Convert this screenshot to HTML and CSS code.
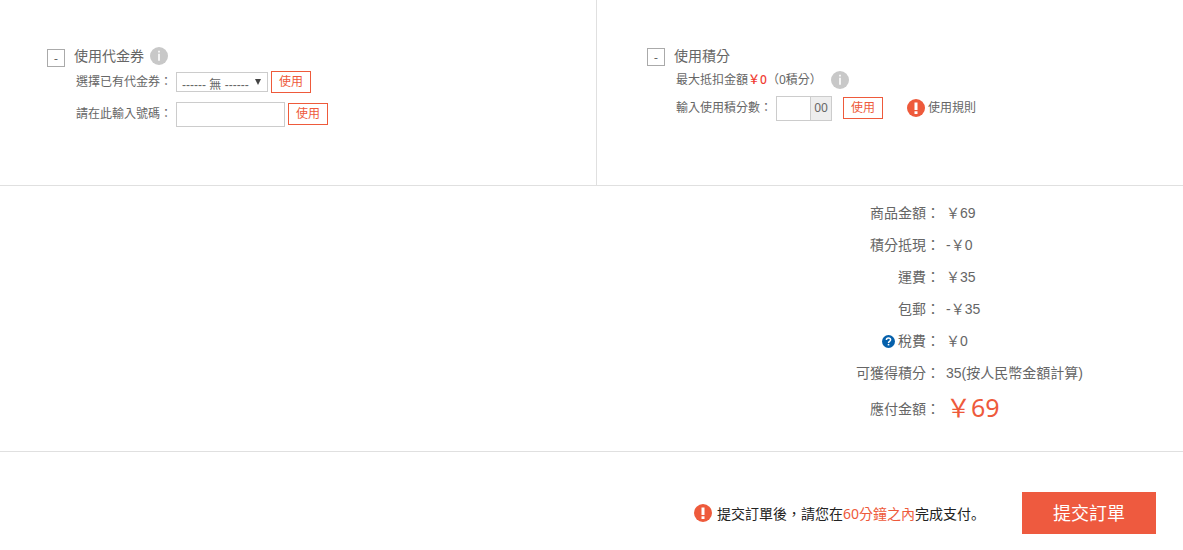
FILE: index.html
```html
<!DOCTYPE html>
<html lang="zh-Hant">
<head>
  <meta charset="UTF-8">
  <title>提交訂單</title>
  <link rel="stylesheet" href="styles.css">
</head>
<body>
  <form>
    <div class="discounts">
      <section class="panel coupon">
        <button type="button" class="toggle">-</button>
        <div class="panel-body">
          <h2>使用代金券
            <svg class="icon" viewBox="0 0 18 18"><circle cx="9" cy="9" r="9" fill="#c8c8c8"/><path d="M8.2 3.8h1.6v1.7H8.2zM8.2 6.8h1.6v7H8.2z" fill="#fff"/></svg>
          </h2>
          <div class="row">
            <label for="coupon">選擇已有代金券：</label>
            <span class="select">
              <select id="coupon"><option>------ 無 ------</option></select>
            </span>
            <button type="button" class="use">使用</button>
          </div>
          <div class="row">
            <label for="code">請在此輸入號碼：</label>
            <input type="text" id="code">
            <button type="button" class="use">使用</button>
          </div>
        </div>
      </section>

      <section class="panel points">
        <button type="button" class="toggle">-</button>
        <div class="panel-body">
          <h2>使用積分</h2>
          <div class="row">
            <span>最大抵扣金額<span class="max">￥0</span>（0積分）</span>
            <svg class="icon info" viewBox="0 0 18 18"><circle cx="9" cy="9" r="9" fill="#c8c8c8"/><path d="M8.2 3.8h1.6v1.7H8.2zM8.2 6.8h1.6v7H8.2z" fill="#fff"/></svg>
          </div>
          <div class="row">
            <label for="points">輸入使用積分數：</label>
            <span class="group"><input type="text" id="points"><span class="addon">00</span></span>
            <button type="button" class="use">使用</button>
            <a href="#" class="rules">
              <svg class="icon" viewBox="0 0 18 18"><circle cx="9" cy="9" r="9" fill="#ee5a3b"/><path d="M7.5 3.5h3v7.5h-3zM7.5 12.3h3V15h-3z" fill="#fff"/></svg>
              使用規則
            </a>
          </div>
        </div>
      </section>
    </div>

    <dl class="summary">
      <dt>商品金額：</dt><dd>￥69</dd>
      <dt>積分抵現：</dt><dd>-￥0</dd>
      <dt>運費：</dt><dd>￥35</dd>
      <dt>包郵：</dt><dd>-￥35</dd>
      <dt>
        <svg class="help" viewBox="0 0 13 13"><circle cx="6.5" cy="6.5" r="6.5" fill="#0560ab"/><path d="M4.4 5Q4.4 3 6.5 3T8.6 4.8Q8.6 5.8 7.5 6.4Q6.5 7 6.5 8" fill="none" stroke="#fff" stroke-width="1.5"/><path d="M5.7 8.9h1.6v1.5H5.7z" fill="#fff"/></svg>
        稅費：
      </dt><dd>￥0</dd>
      <dt>可獲得積分：</dt><dd>35(按人民幣金額計算)</dd>
      <dt class="total">應付金額：</dt><dd class="total price">￥69</dd>
    </dl>

    <div class="submit-bar">
      <p class="tip">
        <svg class="icon" viewBox="0 0 18 18"><circle cx="9" cy="9" r="9" fill="#ee5a3b"/><path d="M7.5 3.5h3v7.5h-3zM7.5 12.3h3V15h-3z" fill="#fff"/></svg>
        <span>提交訂單後，請您在<em>60分鐘之內</em>完成支付<span class="stop" lang="zh-Hans">。</span></span>
      </p>
      <button type="submit" class="submit">提交訂單</button>
    </div>
  </form>
</body>
</html>
```
FILE: styles.css
```css
* {
  box-sizing: border-box;
}
body {
  margin: 0;
  background: #fff;
  color: #666;
  font: 12px/20px "Noto Sans", "Noto Sans CJK TC", sans-serif;
}
button, input, select {
  margin: 0;
  padding: 0;
  font: inherit;
  color: inherit;
  background: #fff;
  border: 1px solid #ccc;
  border-radius: 0;
}
button {
  cursor: pointer;
}
.icon {
  width: 18px;
  height: 18px;
  flex: none;
}

/* coupon and points */
.discounts {
  display: grid;
  grid-template-columns: 597fr 586fr;
  min-height: 186px;
  border-bottom: 1px solid #e0e0e0;
}
.panel {
  display: flex;
  align-items: flex-start;
  gap: 9px;
  padding: 46px 20px 20px 47px;
}
.coupon {
  border-right: 1px solid #e0e0e0;
}
.points {
  padding-left: 50px;
}
.toggle {
  width: 18px;
  height: 18px;
  margin-top: 2px;
  padding-top: 2px;
  border-color: #aaa;
  line-height: 14px;
}
.coupon .toggle {
  margin-top: 3px;
}
h2 {
  display: flex;
  align-items: center;
  gap: 6px;
  margin: 0;
  font-size: 14px;
  font-weight: normal;
  line-height: 20px;
}
.row {
  display: flex;
  align-items: center;
  height: 28px;
  padding-left: 2px;
}
.coupon .row {
  height: 32px;
}
.row label {
  margin-right: 4px;
}
.select {
  position: relative;
}
.select::after {
  content: "";
  position: absolute;
  top: 7px;
  right: 7px;
  border: 3px solid transparent;
  border-top: 6px solid #444;
  border-bottom: 0;
  pointer-events: none;
}
.select select {
  display: block;
  appearance: none;
  width: 92px;
  height: 20px;
  padding: 2px 0 0 5px;
  font-family: "Liberation Sans", "Noto Sans CJK TC", sans-serif;
}
#code {
  width: 109px;
  height: 25px;
}
.use {
  width: 40px;
  height: 22px;
  margin-left: 3px;
  border-color: #ee5a3b;
  color: #ee5a3b;
  line-height: 18px;
}
.max {
  color: #f03c32;
  font-weight: 500;
}
.info {
  margin-left: 9px;
}
.group {
  display: flex;
  border: 1px solid #ccc;
}
.group input {
  width: 33px;
  height: 23px;
  border: 0;
}
.addon {
  width: 21px;
  border-left: 1px solid #ccc;
  background: #eee;
  text-align: center;
  line-height: 22px;
}
.points .use {
  margin-left: 11px;
}
.rules {
  display: flex;
  align-items: center;
  gap: 3px;
  margin-left: 24px;
  color: inherit;
  text-decoration: none;
}

/* price list */
.summary {
  display: grid;
  grid-template-columns: 1fr 237px;
  column-gap: 6px;
  margin: 0;
  padding: 11px 0 22px;
  border-bottom: 1px solid #e0e0e0;
  font: 14px/32px "Liberation Sans", "Noto Sans CJK TC", sans-serif;
}
.summary dt {
  display: flex;
  align-items: center;
  justify-content: flex-end;
  gap: 3px;
}
.summary dd {
  margin: 0;
}
.summary .total {
  line-height: 40px;
}
.summary .price {
  color: #ee5a3b;
  font-family: "Noto Sans", "Noto Sans CJK TC", sans-serif;
  font-size: 25px;
  line-height: 36px;
}
.help {
  width: 13px;
  height: 13px;
}

/* submit */
.submit-bar {
  display: flex;
  align-items: center;
  justify-content: flex-end;
  gap: 37px;
  padding: 40px 27px 16px;
}
.tip {
  display: flex;
  align-items: center;
  gap: 5px;
  margin: 0;
  color: #222;
  font-size: 14px;
}
.tip em {
  color: #ee5a3b;
  font-style: normal;
}
.stop {
  font-family: "Noto Sans CJK SC", sans-serif;
}
.submit {
  width: 134px;
  height: 42px;
  border: 0;
  background: #ee5a3f;
  color: #fff;
  font-size: 18px;
}
```
